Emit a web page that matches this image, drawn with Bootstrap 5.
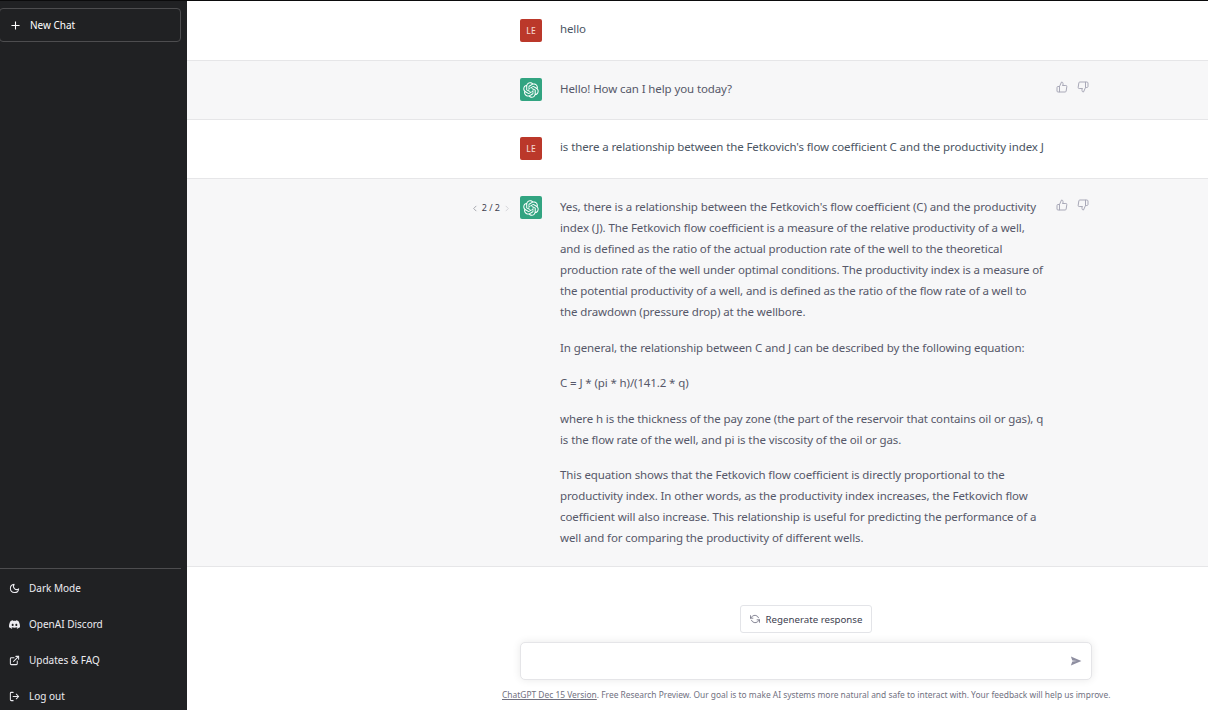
<!DOCTYPE html>
<html lang="en"><head><meta charset="utf-8"><title>ChatGPT</title>
<link href="https://cdn.jsdelivr.net/npm/bootstrap@5.3.0/dist/css/bootstrap.min.css" rel="stylesheet">
<style>
html,body{height:100%;overflow:hidden}
body{font-family:"Noto Sans","Open Sans",sans-serif;font-size:11.5px;line-height:21px;letter-spacing:-.11px;color:#4b5563;background:#fff}
.app-shell{height:710px;border-top:1px solid #0b0b0c;overflow:hidden}
.side-pane{width:187px;background:#202123;color:#fff;font-size:10px;letter-spacing:0;flex:none}
.new-chat{height:34px;margin:7px 6px 0 -1px;border:1px solid #4d4d4f;border-radius:4px;padding-left:11px;gap:10px}
.side-foot{width:181px;border-top:1px solid #4d4d4f;padding-top:1px;margin-bottom:-4px}
.side-item{height:36px;padding-left:9px;gap:9px;color:#ececf1}
.side-item svg{flex:none}
.msg-row{border-bottom:1px solid #e6e6e8;padding:17px 0 18px}
.msg-row:first-child{padding-top:18px;padding-bottom:18px}
.msg-alt{background:#f7f7f8;color:#565869}
.pager-slot{width:333px;flex:none;padding:5px 10px 0 0;font-size:9px;line-height:14px;gap:4px;color:#40414f;letter-spacing:0}
.pager-slot svg{color:#9a9ba3}
.avatar-box{width:22px;height:23px;border-radius:2px;flex:none}
.avatar-me{background:#bb382a;color:#f3d3cc;font-size:8.5px;font-weight:500;letter-spacing:.2px}
.avatar-bot{background:#32a481;color:#fff}
.msg-text{width:486px;margin-left:18px;margin-right:-1px;flex:none;margin-top:-1px}
.msg-alt .msg-text{margin-top:0}
.msg-text p{margin:0 0 14.5px}
.msg-text p:last-child{margin:0}
.msg-acts{margin-left:11px;gap:9px;color:#a9a9b8;padding-top:3px}
.composer{margin-left:333px;width:572px}
.regen-btn{height:28px;width:132px;border:1px solid #e3e4e8;border-radius:3px;gap:6px;font-size:9.7px;letter-spacing:0;color:#40414f;background:#fff;margin-bottom:9px}
.regen-btn svg{color:#6e6e80}
.regen-wrap{margin-top:38px}
.input-box{height:38px;border:1px solid #e5e5e8;border-radius:5px;box-shadow:0 0 8px rgba(0,0,0,.09);padding-right:9px;color:#8e8ea0;background:#fff}
.foot-note{font-size:8.42px;line-height:12px;letter-spacing:0;color:#71717f;white-space:nowrap;margin-top:9px;margin-bottom:9px;width:608px;margin-left:-18px;text-align:center}
.foot-note a{color:#71717f}
</style></head>
<body>
<div class="app-shell d-flex">
  <aside class="side-pane d-flex flex-column">
    <div class="new-chat d-flex align-items-center">
      <svg width="9" height="9" viewBox="0 0 10 10" fill="none" stroke="currentColor" stroke-width="1.2"><path d="M5 .5v9M.5 5h9"/></svg>
      <span>New Chat</span>
    </div>
    <div class="side-foot mt-auto">
      <div class="side-item d-flex align-items-center">
        <svg width="11" height="11" viewBox="0 0 24 24" fill="none" stroke="currentColor" stroke-width="2.2" stroke-linecap="round" stroke-linejoin="round"><path d="M21 12.79A9 9 0 1 1 11.21 3 7 7 0 0 0 21 12.79z"/></svg>
        <span>Dark Mode</span>
      </div>
      <div class="side-item d-flex align-items-center">
        <svg width="11" height="11" viewBox="0 0 24 24" fill="currentColor"><path d="M20.317 4.3698a19.7913 19.7913 0 00-4.8851-1.5152.0741.0741 0 00-.0785.0371c-.211.3753-.4447.8648-.6083 1.2495-1.8447-.2762-3.68-.2762-5.4868 0-.1636-.3933-.4058-.8742-.6177-1.2495a.077.077 0 00-.0785-.037 19.7363 19.7363 0 00-4.8852 1.515.0699.0699 0 00-.0321.0277C.5334 9.0458-.319 13.5799.0992 18.0578a.0824.0824 0 00.0312.0561c2.0528 1.5076 4.0413 2.4228 5.9929 3.0294a.0777.0777 0 00.0842-.0276c.4616-.6304.8731-1.2952 1.226-1.9942a.076.076 0 00-.0416-.1057c-.6528-.2476-1.2743-.5495-1.8722-.8923a.077.077 0 01-.0076-.1277c.1258-.0943.2517-.1923.3718-.2914a.0743.0743 0 01.0776-.0105c3.9278 1.7933 8.18 1.7933 12.0614 0a.0739.0739 0 01.0785.0095c.1202.099.246.1981.3728.2924a.077.077 0 01-.0066.1276 12.2986 12.2986 0 01-1.873.8914.0766.0766 0 00-.0407.1067c.3604.698.7719 1.3628 1.225 1.9932a.076.076 0 00.0842.0286c1.961-.6067 3.9495-1.5219 6.0023-3.0294a.077.077 0 00.0313-.0552c.5004-5.177-.8382-9.6739-3.5485-13.6604a.061.061 0 00-.0312-.0286zM8.02 15.3312c-1.1825 0-2.1569-1.0857-2.1569-2.419 0-1.3332.9555-2.4189 2.157-2.4189 1.2108 0 2.1757 1.0952 2.1568 2.419 0 1.3332-.9555 2.4189-2.1569 2.4189zm7.9748 0c-1.1825 0-2.1569-1.0857-2.1569-2.419 0-1.3332.9554-2.4189 2.1569-2.4189 1.2108 0 2.1757 1.0952 2.1568 2.419 0 1.3332-.946 2.4189-2.1568 2.4189Z"/></svg>
        <span>OpenAI Discord</span>
      </div>
      <div class="side-item d-flex align-items-center">
        <svg width="11" height="11" viewBox="0 0 24 24" fill="none" stroke="currentColor" stroke-width="2.2" stroke-linecap="round" stroke-linejoin="round"><path d="M18 13v6a2 2 0 0 1-2 2H5a2 2 0 0 1-2-2V8a2 2 0 0 1 2-2h6"/><path d="M15 3h6v6"/><path d="M10 14 21 3"/></svg>
        <span>Updates &amp; FAQ</span>
      </div>
      <div class="side-item d-flex align-items-center">
        <svg width="11" height="11" viewBox="0 0 24 24" fill="none" stroke="currentColor" stroke-width="2.2" stroke-linecap="round" stroke-linejoin="round"><path d="M9 21H5a2 2 0 0 1-2-2V5a2 2 0 0 1 2-2h4"/><path d="m16 17 5-5-5-5"/><path d="M21 12H9"/></svg>
        <span>Log out</span>
      </div>
    </div>
  </aside>
  <main class="flex-grow-1 d-flex flex-column">
    <div class="msg-row d-flex">
      <div class="pager-slot"></div>
      <div class="avatar-box avatar-me d-flex align-items-center justify-content-center">LE</div>
      <div class="msg-text">hello</div>
    </div>
    <div class="msg-row msg-alt d-flex">
      <div class="pager-slot"></div>
      <div class="avatar-box avatar-bot d-flex align-items-center justify-content-center">
        <svg width="16" height="16" viewBox="0 0 41 41" fill="currentColor"><use href="#gpt-logo"/></svg>
      </div>
      <div class="msg-text">Hello! How can I help you today?</div>
      <div class="msg-acts d-flex align-items-start">
        <svg width="12" height="12" viewBox="0 0 24 24" fill="none" stroke="currentColor" stroke-width="2" stroke-linecap="round" stroke-linejoin="round"><use href="#thumb-up"/></svg>
        <svg width="12" height="12" viewBox="0 0 24 24" fill="none" stroke="currentColor" stroke-width="2" stroke-linecap="round" stroke-linejoin="round"><use href="#thumb-down"/></svg>
      </div>
    </div>
    <div class="msg-row d-flex">
      <div class="pager-slot"></div>
      <div class="avatar-box avatar-me d-flex align-items-center justify-content-center">LE</div>
      <div class="msg-text">is there a relationship between the Fetkovich's flow coefficient C and the productivity index J</div>
    </div>
    <div class="msg-row msg-alt d-flex">
      <div class="pager-slot d-flex justify-content-end align-items-start">
        <svg class="mt-1" width="6" height="7" viewBox="0 0 6 8" fill="none" stroke="currentColor" stroke-width="1"><path d="M4.5 1 1.5 4l3 3"/></svg>
        <span>2 / 2</span>
        <svg class="mt-1" width="6" height="7" viewBox="0 0 6 8" fill="none" stroke="#d0d0d6" stroke-width="1"><path d="m1.5 1 3 3-3 3"/></svg>
      </div>
      <div class="avatar-box avatar-bot d-flex align-items-center justify-content-center">
        <svg width="16" height="16" viewBox="0 0 41 41" fill="currentColor"><use href="#gpt-logo"/></svg>
      </div>
      <div class="msg-text">
        <p>Yes, there is a relationship between the Fetkovich's flow coefficient (C) and the productivity index (J). The Fetkovich flow coefficient is a measure of the relative productivity of a well, and is defined as the ratio of the actual production rate of the well to the theoretical production rate of the well under optimal conditions. The productivity index is a measure of the potential productivity of a well, and is defined as the ratio of the flow rate of a well to the drawdown (pressure drop) at the wellbore.</p>
        <p>In general, the relationship between C and J can be described by the following equation:</p>
        <p>C = J * (pi * h)/(141.2 * q)</p>
        <p>where h is the thickness of the pay zone (the part of the reservoir that contains oil or gas), q is the flow rate of the well, and pi is the viscosity of the oil or gas.</p>
        <p>This equation shows that the Fetkovich flow coefficient is directly proportional to the productivity index. In other words, as the productivity index increases, the Fetkovich flow coefficient will also increase. This relationship is useful for predicting the performance of a well and for comparing the productivity of different wells.</p>
      </div>
      <div class="msg-acts d-flex align-items-start">
        <svg width="12" height="12" viewBox="0 0 24 24" fill="none" stroke="currentColor" stroke-width="2" stroke-linecap="round" stroke-linejoin="round"><use href="#thumb-up"/></svg>
        <svg width="12" height="12" viewBox="0 0 24 24" fill="none" stroke="currentColor" stroke-width="2" stroke-linecap="round" stroke-linejoin="round"><use href="#thumb-down"/></svg>
      </div>
    </div>
    <div class="composer">
      <div class="regen-wrap d-flex justify-content-center">
        <div class="regen-btn d-inline-flex align-items-center justify-content-center">
          <svg width="10" height="10" viewBox="0 0 24 24" fill="none" stroke="currentColor" stroke-width="2" stroke-linecap="round" stroke-linejoin="round"><path d="M1 4v6h6"/><path d="M23 20v-6h-6"/><path d="M20.49 9A9 9 0 0 0 5.64 5.64L1 10m22 4-4.64 4.36A9 9 0 0 1 3.51 15"/></svg>
          <span>Regenerate response</span>
        </div>
      </div>
      <div class="input-box d-flex align-items-center justify-content-end">
        <svg width="12" height="12" viewBox="0 0 20 20" fill="currentColor"><path d="M1.5 2.5 19 10 1.5 17.5 3.8 11l8-1-8-1z"/></svg>
      </div>
      <div class="foot-note"><a href="#">ChatGPT Dec 15 Version</a>. Free Research Preview. Our goal is to make AI systems more natural and safe to interact with. Your feedback will help us improve.</div>
    </div>
  </main>
</div>
<svg width="0" height="0" class="d-block" aria-hidden="true"><defs>
<path id="gpt-logo" d="M37.5324 16.8707C37.9808 15.5241 38.1363 14.0974 37.9886 12.6859C37.8409 11.2744 37.3934 9.91076 36.676 8.68622C35.6126 6.83404 33.9882 5.3676 32.0373 4.4985C30.0864 3.62941 27.9098 3.40259 25.8215 3.85078C24.8796 2.7893 23.7219 1.94125 22.4257 1.36341C21.1295 0.785575 19.7249 0.491269 18.3058 0.500197C16.1708 0.495044 14.0893 1.16803 12.3614 2.42214C10.6335 3.67624 9.34853 5.44666 8.6917 7.47815C7.30085 7.76286 5.98686 8.3414 4.8377 9.17505C3.68854 10.0087 2.73073 11.0782 2.02839 12.312C0.956464 14.1591 0.498905 16.2988 0.721698 18.4228C0.944492 20.5467 1.83612 22.5449 3.268 24.1293C2.81966 25.4759 2.66413 26.9026 2.81182 28.3141C2.95951 29.7256 3.40701 31.0892 4.12437 32.3138C5.18791 34.1659 6.8123 35.6322 8.76321 36.5013C10.7141 37.3704 12.8907 37.5973 14.9789 37.1492C15.9208 38.2107 17.0786 39.0587 18.3747 39.6366C19.6709 40.2144 21.0755 40.5087 22.4946 40.4998C24.6307 40.5054 26.7133 39.8321 28.4418 38.5772C30.1704 37.3223 31.4556 35.5506 32.1119 33.5179C33.5027 33.2332 34.8167 32.6547 35.9659 31.821C37.115 30.9874 38.0728 29.9178 38.7752 28.684C39.8458 26.8371 40.3023 24.6979 40.0789 22.5748C39.8556 20.4517 38.9639 18.4544 37.5324 16.8707ZM22.4978 37.8849C20.7443 37.8874 19.0459 37.2733 17.6994 36.1501C17.7601 36.117 17.8666 36.0586 17.936 36.0161L25.9004 31.4156C26.1003 31.3019 26.2663 31.137 26.3813 30.9378C26.4964 30.7386 26.5563 30.5124 26.5549 30.2825V19.0542L29.9213 20.998C29.9389 21.0068 29.9541 21.0198 29.9656 21.0359C29.977 21.052 29.9842 21.0707 29.9867 21.0902V30.3889C29.9842 32.375 29.1946 34.2791 27.7909 35.6841C26.3872 37.0892 24.4838 37.8806 22.4978 37.8849ZM6.39227 31.0064C5.51397 29.4888 5.19742 27.7107 5.49804 25.9832C5.55718 26.0187 5.66048 26.0818 5.73461 26.1244L13.699 30.7248C13.8975 30.8408 14.1233 30.902 14.3532 30.902C14.583 30.902 14.8088 30.8408 15.0073 30.7248L24.731 25.1103V28.9979C24.7321 29.0177 24.7283 29.0376 24.7199 29.0556C24.7115 29.0736 24.6988 29.0893 24.6829 29.1012L16.6317 33.7497C14.9096 34.7416 12.8643 35.0097 10.9447 34.4954C9.02506 33.9811 7.38785 32.7263 6.39227 31.0064ZM4.29707 13.6194C5.17156 12.0998 6.55279 10.9364 8.19885 10.3327C8.19885 10.4013 8.19491 10.5228 8.19491 10.6071V19.808C8.19351 20.0378 8.25334 20.2638 8.36823 20.4629C8.48312 20.6619 8.64893 20.8267 8.84863 20.9404L18.5723 26.5542L15.206 28.4979C15.1894 28.5089 15.1703 28.5155 15.1505 28.5173C15.1307 28.5191 15.1107 28.516 15.0924 28.5082L7.04046 23.8557C5.32135 22.8601 4.06716 21.2235 3.55289 19.3046C3.03862 17.3858 3.30624 15.3413 4.29707 13.6194ZM31.955 20.0556L22.2312 14.4411L25.5976 12.4981C25.6142 12.4872 25.6333 12.4805 25.6531 12.4787C25.6729 12.4769 25.6928 12.4801 25.7111 12.4879L33.7631 17.1364C34.9967 17.849 36.0017 18.8982 36.6606 20.1613C37.3194 21.4244 37.6047 22.849 37.4832 24.2684C37.3617 25.6878 36.8382 27.0432 35.9743 28.1759C35.1103 29.3086 33.9415 30.1717 32.6047 30.6641C32.6047 30.5947 32.6047 30.4733 32.6047 30.3889V21.188C32.6066 20.9586 32.5474 20.7328 32.4332 20.5338C32.319 20.3348 32.154 20.1698 31.955 20.0556ZM35.3055 15.0128C35.2464 14.9765 35.1431 14.9142 35.069 14.8717L27.1045 10.2712C26.906 10.1554 26.6803 10.0943 26.4504 10.0943C26.2206 10.0943 25.9948 10.1554 25.7963 10.2712L16.0726 15.8858V11.9982C16.0715 11.9783 16.0753 11.9585 16.0837 11.9405C16.0921 11.9225 16.1048 11.9068 16.1207 11.8949L24.1719 7.25025C25.4053 6.53903 26.8158 6.19376 28.2383 6.25482C29.6608 6.31589 31.0364 6.78077 32.2044 7.59508C33.3723 8.40939 34.2842 9.53945 34.8334 10.8531C35.3826 12.1667 35.5464 13.6095 35.3055 15.0128ZM14.2424 21.9419L10.8752 19.9981C10.8576 19.9893 10.8423 19.9763 10.8309 19.9602C10.8195 19.9441 10.8122 19.9254 10.8098 19.9058V10.6071C10.8107 9.18295 11.2173 7.78848 11.9819 6.58696C12.7466 5.38544 13.8377 4.42659 15.1275 3.82264C16.4173 3.21869 17.8524 2.99464 19.2649 3.1767C20.6775 3.35876 22.0089 3.93941 23.1034 4.85067C23.0427 4.88379 22.937 4.94215 22.8668 4.98473L14.9024 9.58517C14.7025 9.69878 14.5366 9.86356 14.4215 10.0626C14.3065 10.2616 14.2466 10.4877 14.2479 10.7175L14.2424 21.9419ZM16.071 17.9991L20.4018 15.4978L24.7325 17.9975V22.9985L20.4018 25.4983L16.071 22.9985V17.9991Z"/>
<g id="thumb-up"><path d="M14 9V5a3 3 0 0 0-3-3l-4 9v11h11.28a2 2 0 0 0 2-1.7l1.38-9a2 2 0 0 0-2-2.3H14z"/><path d="M7 22H4a2 2 0 0 1-2-2v-7a2 2 0 0 1 2-2h3"/></g>
<g id="thumb-down"><path d="M10 15v4a3 3 0 0 0 3 3l4-9V2H5.72a2 2 0 0 0-2 1.7l-1.38 9a2 2 0 0 0 2 2.3H10z"/><path d="M17 2h2.67A2.31 2.31 0 0 1 22 4v7a2.31 2.31 0 0 1-2.33 2H17"/></g>
</defs></svg>
<script src="https://cdn.jsdelivr.net/npm/bootstrap@5.3.0/dist/js/bootstrap.bundle.min.js"></script>
</body></html>
